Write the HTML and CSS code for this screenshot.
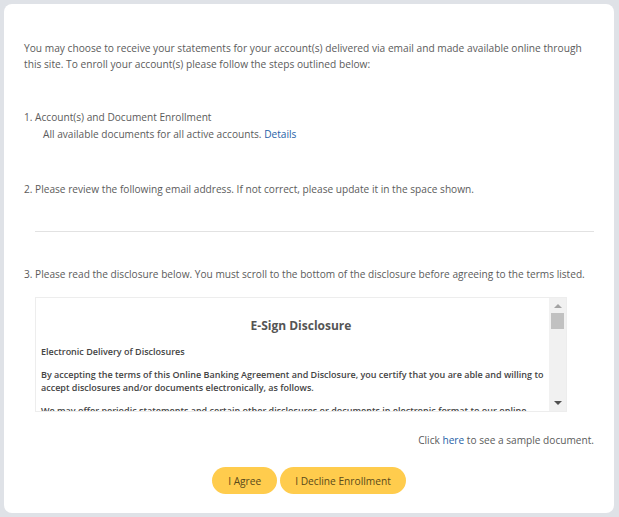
FILE: index.html
```html
<!DOCTYPE html>
<html>
<head>
<meta charset="utf-8">
<link rel="stylesheet" href="styles.css">
</head>
<body>
<div class="card">
  <p class="intro">You may choose to receive your statements for your account(s) delivered via email and made available online through this site. To enroll your account(s) please follow the steps outlined below:</p>
  <div class="step step1">
    <div class="step-title">1. Account(s) and Document Enrollment</div>
    <div class="step-sub">All available documents for all active accounts. <a class="link">Details</a></div>
  </div>
  <div class="step step2">
    <div class="step-title">2. Please review the following email address. If not correct, please update it in the space shown.</div>
    <div class="rule"></div>
  </div>
  <div class="step step3">
    <div class="step-title">3. Please read the disclosure below. You must scroll to the bottom of the disclosure before agreeing to the terms listed.</div>
    <div class="disclosure">
      <div class="disc-body">
        <h2 class="disc-title">E-Sign Disclosure</h2>
        <p class="disc-p">Electronic Delivery of Disclosures</p>
        <p class="disc-p">By accepting the terms of this Online Banking Agreement and Disclosure, you certify that you are able and willing to accept disclosures and/or documents electronically, as follows.</p>
        <p class="disc-p">We may offer periodic statements and certain other disclosures or documents in electronic format to our online banking customers.</p>
      </div>
      <div class="scrollbar">
        <span class="arrow up"></span>
        <span class="thumb"></span>
        <span class="track"></span>
        <span class="arrow down"></span>
      </div>
    </div>
    <div class="sample">Click <a class="link">here</a> to see a sample document.</div>
  </div>
  <div class="actions">
    <button class="btn btn-agree">I Agree</button>
    <button class="btn">I Decline Enrollment</button>
  </div>
</div>
</body>
</html>
```
FILE: styles.css
```css
html, body { margin: 0; padding: 0; }
body {
  background: #dfe2e7;
  font-family: "Open Sans", "Noto Sans", sans-serif;
  color: #5b5b5b;
  font-size: 10.15px;
  padding: 4px 5px 4px 4px;
  width: 619px;
  height: 517px;
  box-sizing: border-box;
}
.card {
  background: #fff;
  border-radius: 8px;
  height: 509px;
  box-sizing: border-box;
  padding: 36px 20px 0 20px;
  display: flex;
  flex-direction: column;
}
.intro {
  margin: 0;
  line-height: 16px;
  font-size: 10.2px;
}
.step1 { margin-top: 37px; }
.step-title { line-height: 16px; }
.step-sub { line-height: 16px; margin-left: 19px; margin-top: 1px; }
.link { color: #1f5fa8; }
.step2 { margin-top: 39px; }
.rule {
  margin: 34px 0 0 11px;
  border-top: 1px solid #e2e2e2;
}
.step3 { margin-top: 34px; }
.disclosure {
  margin: 15px 27px 0 11px;
  height: 113px;
  border: 1px solid #ededed;
  display: flex;
  overflow: hidden;
}
.disc-body {
  flex: 1;
  padding: 0 2px 0 5px;
  color: #444;
  font-weight: 600;
  font-size: 9px;
}
.disc-title {
  margin: 18px 0 0 14px;
  text-align: center;
  font-size: 12px;
  font-weight: 700;
  line-height: 20px;
  color: #555;
}
.disc-p { margin: 9px 0 0; line-height: 13px; }
.disc-p + .disc-p { margin-top: 10px; }
.scrollbar {
  width: 17px;
  background: #f1f1f1;
  display: flex;
  flex-direction: column;
  align-items: center;
}
.arrow { width: 0; height: 0; border-left: 4px solid transparent; border-right: 4px solid transparent; }
.arrow.up { border-bottom: 4px solid #a3a3a3; margin-top: 6px; }
.arrow.down { border-top: 4px solid #505050; margin-bottom: 6px; }
.thumb { width: 13px; height: 16px; background: #c1c1c1; margin-top: 5px; }
.track { flex: 1; }
.sample {
  text-align: right;
  margin: 20px 0 0;
  line-height: 16px;
}
.actions {
  margin-top: 19px;
  display: flex;
  justify-content: center;
  gap: 3px;
}
.btn {
  font-family: inherit;
  font-size: 10.2px;
  color: #5a4a1a;
  background: #ffcc4d;
  border: none;
  border-radius: 14px;
  height: 27px;
  padding: 0 15px;
}
.btn-agree { padding: 0 16px; }
```
